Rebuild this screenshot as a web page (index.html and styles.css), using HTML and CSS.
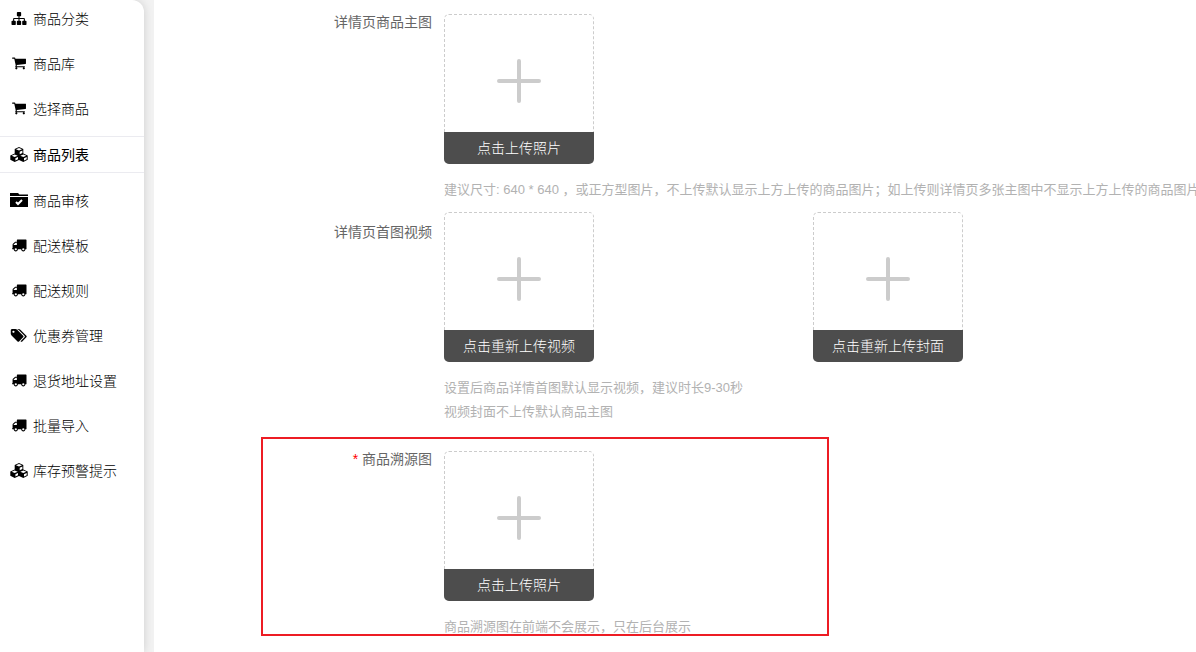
FILE: index.html
```
<!DOCTYPE html>
<html lang="zh-CN">
<head>
    <meta charset="UTF-8">
    <meta name="viewport" content="width=device-width, initial-scale=1.0">
    <title>商品列表</title>
    <link rel="stylesheet" href="styles.css">
</head>

<body>
    <!-- 图标 -->
    <svg class="sprite" aria-hidden="true">
        <symbol id="i-sitemap" viewBox="0 0 1792 1792">
            <path d="M1792 1248v320q0 40-28 68t-68 28h-320q-40 0-68-28t-28-68v-320q0-40 28-68t68-28h96v-192h-512v192h96q40 0 68 28t28 68v320q0 40-28 68t-68 28h-320q-40 0-68-28t-28-68v-320q0-40 28-68t68-28h96v-192h-512v192h96q40 0 68 28t28 68v320q0 40-28 68t-68 28h-320q-40 0-68-28t-28-68v-320q0-40 28-68t68-28h96v-192q0-52 38-90t90-38h512v-192h-96q-40 0-68-28t-28-68v-320q0-40 28-68t68-28h320q40 0 68 28t28 68v320q0 40-28 68t-68 28h-96v192h512q52 0 90 38t38 90v192h96q40 0 68 28t28 68z"/>
        </symbol>
        <symbol id="i-cart" viewBox="0 64 1792 1792">
            <path d="M704 1536q0 52-38 90t-90 38-90-38-38-90 38-90 90-38 90 38 38 90zm896 0q0 52-38 90t-90 38-90-38-38-90 38-90 90-38 90 38 38 90zm128-1088v512q0 24-16.5 42.5t-40.5 21.5l-1044 122q13 60 13 70 0 16-24 64h920q26 0 45 19t19 45-19 45-45 19h-1024q-26 0-45-19t-19-45q0-11 8-31.5t16-36 21.5-40 15.5-29.5l-177-823h-204q-26 0-45-19t-19-45 19-45 45-19h256q16 0 28.5 6.5t19.5 15.5 13 24.5 8 26 5.5 29.5 4.5 26h1201q26 0 45 19t19 45z"/>
        </symbol>
        <symbol id="i-cubes" viewBox="0 0 18 15">
            <path d="M9 0l4.300 1.900v4.600l4.400 1.900v4.400L13.300 15 9 13 4.700 15 .3 12.800V8.400l4.400-1.900V1.900z"/>
            <path class="cut" d="M9 1l3 1.300-3 1.300-3-1.300zM9.700 4.700l2.700-1.200v2.600L9.700 7.300zM4.700 7.400l3 1.300-3 1.300-3-1.300zM5.400 11.200L8 10v2.300l-2.600 1.300zM13.300 7.400l3 1.300-3 1.300-3-1.300zM14 11.200l2.700-1.200v2.300L14 13.600z"/>
        </symbol>
        <symbol id="i-folder" viewBox="0 0 18 15">
            <path d="M0 0h8l1.500 1.500H18V3H0zM0 4h18v10H0z"/>
            <path class="check" d="M6 9l2 2L12 7"/>
        </symbol>
        <symbol id="i-truck" viewBox="0 64 1792 1792">
            <path d="M640 1408q0-52-38-90t-90-38-90 38-38 90 38 90 90 38 90-38 38-90zm-384-512h384v-256h-158q-13 0-22 9l-195 195q-9 9-9 22v30zm1280 512q0-52-38-90t-90-38-90 38-38 90 38 90 90 38 90-38 38-90zm256-1088v1024q0 15-4 26.500t-13.500 18.500-16.500 11.500-23.500 6-22.500 2-25.500 0-22.500-.5q0 106-75 181t-181 75-181-75-75-181h-384q0 106-75 181t-181 75-181-75-75-181h-64q-3 0-22.500.5t-25.500 0-22.500-2-23.500-6-16.500-11.500-13.500-18.500-4-26.500q0-26 19-45t45-19v-320q0-8-.5-35t0-38 2.500-34.500 6.500-37 14-30.500 22.500-30l198-198q19-19 50.500-32t58.500-13h160v-192q0-26 19-45t45-19h1024q26 0 45 19t19 45z"/>
        </symbol>
        <symbol id="i-tags" viewBox="0 0 1836 1792">
            <path d="M384 448q0-53-37.500-90.500t-90.500-37.500-90.500 37.500-37.500 90.500 37.500 90.500 90.500 37.500 90.500-37.500 37.500-90.500zm1067 576q0 53-37 90l-491 492q-39 37-91 37-53 0-90-37l-715-716q-38-37-64.500-101t-26.500-117v-416q0-52 38-90t90-38h416q53 0 117 26.500t102 64.500l715 714q37 39 37 91zm384 0q0 53-37 90l-491 492q-39 37-91 37-36 0-59-14t-53-45l470-470q37-37 37-90 0-52-37-91l-715-714q-38-38-102-64.500t-117-26.500h224q53 0 117 26.500t102 64.500l715 714q37 39 37 91z"/>
        </symbol>
        <symbol id="i-plus" viewBox="0 0 44 44">
            <path d="M22 2v40M2 22h40"/>
        </symbol>
    </svg>

    <div class="page">
        <nav class="sidebar">
            <a href="#"><svg class="icon"><use href="#i-sitemap"/></svg>商品分类</a>
            <a href="#"><svg class="icon"><use href="#i-cart"/></svg>商品库</a>
            <a href="#"><svg class="icon"><use href="#i-cart"/></svg>选择商品</a>
            <a href="#" class="active"><svg class="icon"><use href="#i-cubes"/></svg>商品列表</a>
            <a href="#"><svg class="icon"><use href="#i-folder"/></svg>商品审核</a>
            <a href="#"><svg class="icon"><use href="#i-truck"/></svg>配送模板</a>
            <a href="#"><svg class="icon"><use href="#i-truck"/></svg>配送规则</a>
            <a href="#"><svg class="icon"><use href="#i-tags"/></svg>优惠券管理</a>
            <a href="#"><svg class="icon"><use href="#i-truck"/></svg>退货地址设置</a>
            <a href="#"><svg class="icon"><use href="#i-truck"/></svg>批量导入</a>
            <a href="#"><svg class="icon"><use href="#i-cubes"/></svg>库存预警提示</a>
        </nav>

        <main class="content">
            <div class="form_row">
                <div class="form_label" id="label_main">详情页商品主图</div>
                <div class="form_field">
                    <div class="upload_list">
                        <button type="button" class="upload" aria-describedby="label_main">
                            <svg class="plus"><use href="#i-plus"/></svg>
                            <span class="upload_text">点击上传照片</span>
                        </button>
                    </div>
                    <p class="hint">建议尺寸: 640 * 640 ，或正方型图片，不上传默认显示上方上传的商品图片；如上传则详情页多张主图中不显示上方上传的商品图片</p>
                </div>
            </div>

            <div class="form_row video">
                <div class="form_label" id="label_video">详情页首图视频</div>
                <div class="form_field">
                    <div class="upload_list">
                        <button type="button" class="upload" aria-describedby="label_video">
                            <svg class="plus"><use href="#i-plus"/></svg>
                            <span class="upload_text">点击重新上传视频</span>
                        </button>
                        <button type="button" class="upload" aria-describedby="label_video">
                            <svg class="plus"><use href="#i-plus"/></svg>
                            <span class="upload_text">点击重新上传封面</span>
                        </button>
                    </div>
                    <p class="hint">设置后商品详情首图默认显示视频，建议时长9-30秒<br>视频封面不上传默认商品主图</p>
                </div>
            </div>

            <div class="form_row source">
                <div class="form_label" id="label_source"><span class="required">*</span> 商品溯源图</div>
                <div class="form_field">
                    <div class="upload_list">
                        <button type="button" class="upload" aria-describedby="label_source">
                            <svg class="plus"><use href="#i-plus"/></svg>
                            <span class="upload_text">点击上传照片</span>
                        </button>
                    </div>
                    <p class="hint">商品溯源图在前端不会展示，只在后台展示</p>
                </div>
            </div>
        </main>
    </div>
</body>

</html>
```
FILE: styles.css
```
* {
    box-sizing: border-box;
}

body {
    margin: 0;
    font-family: "Liberation Sans", "Noto Sans CJK SC", sans-serif;
    font-size: 14px;
    color: #666;
    background-color: #f2f2f2;
}

.sprite {
    display: none;
}

.page {
    display: flex;
    gap: 10px;
    min-height: 100vh;
}

/* 左侧菜单 */
.sidebar {
    display: flex;
    flex-direction: column;
    flex: none;
    gap: 10px;
    width: 144px;
    padding-top: 1px;
    background-color: #fff;
    border-top-right-radius: 12px;
    box-shadow: 0 0 10px rgba(0, 0, 0, 0.15);
}

.sidebar a {
    display: flex;
    align-items: center;
    gap: 5px;
    padding: 2px 0 0 10px;
    line-height: 33px;
    font-weight: 300;
    color: #000;
    text-decoration: none;
}

.sidebar a.active {
    font-weight: 400;
    border-top: 1px solid #ebebf0;
    border-bottom: 1px solid #ebebf0;
}

.icon {
    flex: none;
    width: 18px;
    height: 15px;
    margin-bottom: 2px;
}

.cut {
    fill: #fff;
}

.check {
    fill: none;
    stroke: #fff;
    stroke-width: 2;
}

/* 表单 */
.content {
    flex: 1;
    min-width: 0;
    padding-top: 14px;
    overflow: hidden;
    background-color: #fff;
}

.form_row {
    display: flex;
    position: relative;
    margin-bottom: 10px;
}

.form_row.video {
    margin-bottom: 27px;
}

.form_label {
    flex: none;
    width: 290px;
    padding-right: 12px;
    line-height: 16px;
    text-align: right;
}

.video .form_label {
    padding-top: 12px;
}

.required {
    color: #f00;
}

.form_field {
    flex: 1;
    min-width: 0;
}

.upload_list {
    display: flex;
    gap: 219px;
}

.upload {
    display: flex;
    flex-direction: column;
    align-items: center;
    justify-content: space-between;
    width: 150px;
    height: 150px;
    padding: 44px 0 0;
    font-family: inherit;
    font-size: 14px;
    background: none;
    border: 1px dashed #ccc;
    border-radius: 5px;
    cursor: pointer;
}

.plus {
    width: 44px;
    height: 44px;
    stroke: #ccc;
    stroke-width: 4;
    stroke-linecap: round;
}

.upload_text {
    width: 150px;
    margin-bottom: -1px;
    line-height: 32px;
    font-weight: 300;
    color: #fff;
    background-color: #4d4d4d;
    border-radius: 0 0 5px 5px;
}

.hint {
    margin: 14px 0 0;
    font-size: 13px;
    line-height: 24px;
    color: #b2b2b2;
    white-space: nowrap;
}

/* 红框标注 */
.source::after {
    content: "";
    box-sizing: border-box;
    position: absolute;
    top: -14px;
    left: 107px;
    width: 568px;
    height: 199px;
    border: 2px solid #ed1c24;
    pointer-events: none;
}
```
